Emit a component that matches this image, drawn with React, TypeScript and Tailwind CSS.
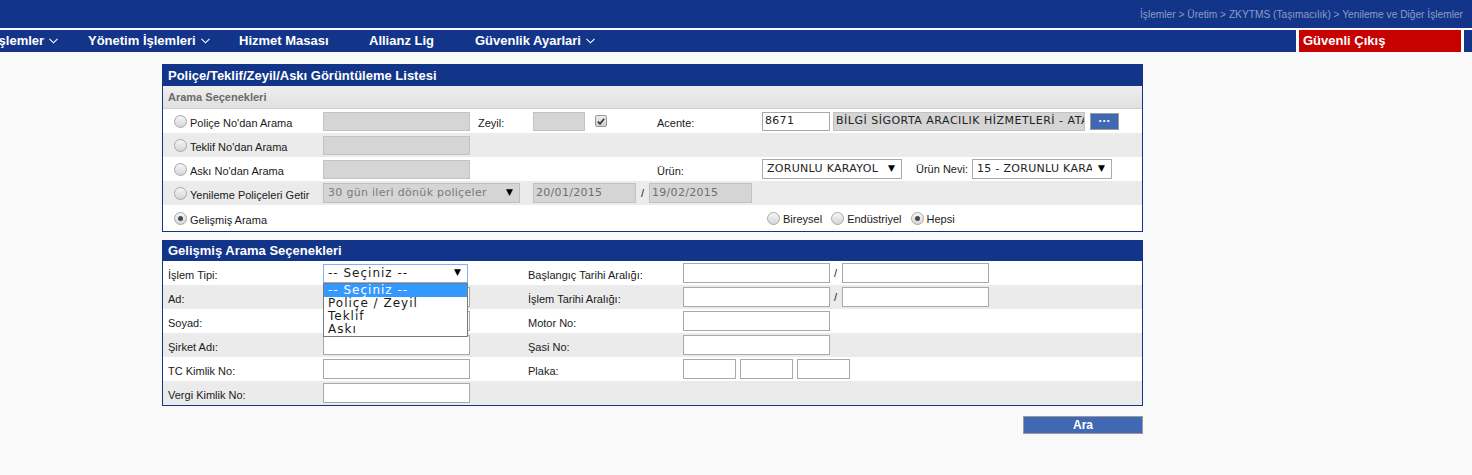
import type { ReactNode } from 'react';

const navy = 'bg-[#12358a]';
const labelFont = "font-['Liberation_Sans',Arial,sans-serif] text-[11px] text-[#1a1a1a]";
const boxFont = "font-['DejaVu_Sans',Verdana,sans-serif] text-[11px] tracking-[0.3px]";
const bigBoxFont = "font-['DejaVu_Sans',Verdana,sans-serif] text-[12px] tracking-[1px]";

function NavChevron() {
  return (
    <svg width="9" height="6" viewBox="0 0 9 6" className="ml-[5px] shrink-0">
      <polyline points="0.5,0.8 4.5,4.8 8.5,0.8" fill="none" stroke="white" strokeWidth="1.1" />
    </svg>
  );
}

function Radio({ checked = false }: { checked?: boolean }) {
  return (
    <span className="flex h-[13px] w-[13px] shrink-0 items-center justify-center rounded-full border border-[#a8a8a8] bg-linear-to-b from-[#f6f6f6] to-[#d6d6d6]">
      {checked && <span className="h-[5px] w-[5px] rounded-full bg-[#4a4a4a]" />}
    </span>
  );
}

function Box({
  className = '',
  value = '',
  disabled = false,
  textColor = 'text-[#222]',
}: {
  className?: string;
  value?: string;
  disabled?: boolean;
  textColor?: string;
}) {
  return (
    <div
      className={`flex items-center overflow-hidden whitespace-nowrap border px-[2px] ${boxFont} ${textColor} ${
        disabled ? 'border-[#c2c2c2] bg-[#d5d5d5]' : 'border-[#a9a9a9] bg-white'
      } ${className}`}
    >
      {value}
    </div>
  );
}

function Select({
  className = '',
  value,
  disabled = false,
  focus = false,
  font = boxFont,
}: {
  className?: string;
  value: string;
  disabled?: boolean;
  focus?: boolean;
  font?: string;
}) {
  return (
    <div
      className={`${className} flex items-center overflow-hidden whitespace-nowrap border pl-[4px] pr-[6px] ${font} ${
        disabled
          ? 'border-[#bfbfbf] bg-[#d5d5d5] text-[#7a7a7a]'
          : focus
            ? 'border-[#7eb4ea] bg-white text-[#222]'
            : 'border-[#a9a9a9] bg-white text-[#222]'
      }`}
    >
      <span className="flex-1 overflow-hidden">{value}</span>
      <span className="ml-[6px] shrink-0 text-[9px] tracking-normal text-black">▼</span>
    </div>
  );
}

function Lbl({ children, className = 'pt-[3px]' }: { children: ReactNode; className?: string }) {
  return <span className={`${labelFont} ${className}`}>{children}</span>;
}

function Row({ children, gray = false, className = 'h-[24px]' }: { children: ReactNode; gray?: boolean; className?: string }) {
  return <div className={`flex items-center ${className} ${gray ? 'bg-[#ebebeb]' : 'bg-white'}`}>{children}</div>;
}

function RadioLabel({ text, checked = false }: { text: string; checked?: boolean }) {
  return (
    <div className="flex w-[160px] items-center gap-[3px] pl-[11px]">
      <Radio checked={checked} />
      <Lbl className="pt-[4px]">{text}</Lbl>
    </div>
  );
}

function AdvRow({
  gray = false,
  left,
  leftInput,
  right,
  rightInput,
}: {
  gray?: boolean;
  left: string;
  leftInput?: ReactNode;
  right?: string;
  rightInput?: ReactNode;
}) {
  return (
    <Row gray={gray}>
      <div className="w-[160px] pl-[5px]">
        <Lbl className="pt-[1px]">{left}</Lbl>
      </div>
      <div className="w-[205px]">{leftInput ?? <Box className="h-[20px] w-[147px]" />}</div>
      <div className="w-[155px]">{right && <Lbl className="pt-[1px]">{right}</Lbl>}</div>
      <div className="flex items-center">{rightInput}</div>
    </Row>
  );
}

function DateRange() {
  return (
    <>
      <Box className="h-[20px] w-[147px]" />
      <span className={`${labelFont} w-[12px] pl-[4px]`}>/</span>
      <Box className="h-[20px] w-[147px]" />
    </>
  );
}

export default function App() {
  return (
    <div className="h-[475px] w-full overflow-hidden bg-[#f9f9f9]">
      <div className={`${navy} h-[28px] pr-[9px] text-right`}>
        <span className="font-['Liberation_Sans',Tahoma,sans-serif] text-[10.2px] leading-[14px] text-[#8e9bc4]">
          İşlemler &gt; Üretim &gt; ZKYTMS (Taşımacılık) &gt; Yenileme ve Diğer İşlemler
        </span>
      </div>
      <div className="h-[2px] bg-white" />
      <div className={`${navy} flex h-[22px] items-center font-['Liberation_Sans',Tahoma,sans-serif] text-[13px] font-bold text-white`}>
        <div className="ml-[-5px] flex w-[93px] shrink-0 items-center">
          İşlemler
          <NavChevron />
        </div>
        <div className="flex w-[151px] shrink-0 items-center">
          Yönetim İşlemleri
          <NavChevron />
        </div>
        <div className="w-[130px] shrink-0">Hizmet Masası</div>
        <div className="w-[106px] shrink-0">Allianz Lig</div>
        <div className="flex shrink-0 items-center">
          Güvenlik Ayarlari
          <NavChevron />
        </div>
        <div className="flex-1" />
        <div className="flex h-full w-[168px] items-stretch">
          <div className="w-[3px] bg-white" />
          <div className="flex w-[162px] items-center bg-[#c70000] pl-[4px]">Güvenli Çıkış</div>
          <div className="w-[3px] bg-white" />
        </div>
        <div className="w-[8px]" />
      </div>

      <div className="ml-[162px] mt-[12px] w-[981px]">
        {/* Arama */}
        <div className="border border-[#12358a]">
          <div className={`${navy} flex h-[21px] items-center pl-[5px] font-['Liberation_Sans',Tahoma,sans-serif] text-[13px] font-bold text-white`}>
            Poliçe/Teklif/Zeyil/Askı Görüntüleme Listesi
          </div>
          <div className="flex h-[23px] items-center border-b border-[#cfcfcf] bg-linear-to-b from-[#efefef] to-[#e0e0e0] pl-[5px] font-['Liberation_Sans',Tahoma,sans-serif] text-[11px] font-bold text-[#6b6b6b]">
            Arama Seçenekleri
          </div>

          <Row>
            <RadioLabel text="Poliçe No'dan Arama" />
            <div className="w-[155px]">
              <Box className="h-[19px] w-[147px]" disabled />
            </div>
            <div className="w-[55px]">
              <Lbl className="pt-[1px]">Zeyil:</Lbl>
            </div>
            <div className="flex w-[124px] items-center">
              <Box className="h-[19px] w-[52px]" disabled />
              <span className="ml-[10px] flex h-[12px] w-[12px] items-center justify-center rounded-[2px] border border-[#9a9a9a] bg-linear-to-b from-[#ececec] to-[#cfcfcf]">
                <svg width="8" height="7" viewBox="0 0 8 7">
                  <polyline points="0.8,3.6 3,5.8 7.2,0.8" fill="none" stroke="#333" strokeWidth="1.6" />
                </svg>
              </span>
            </div>
            <div className="w-[105px]">
              <Lbl className="pt-[1px]">Acente:</Lbl>
            </div>
            <div className="flex items-center">
              <Box className="h-[19px] w-[68px]" value="8671" />
              <Box className="ml-[3px] h-[19px] w-[252px] tracking-[0.5px]" disabled value="BİLGİ SİGORTA ARACILIK HİZMETLERİ - ATA" />
              <div className="ml-[5px] flex h-[17px] w-[29px] items-center justify-center border border-[#9c9c9c] bg-[#4169b3] font-['Liberation_Sans',Arial,sans-serif] text-[12px] font-bold leading-none text-white">
                ···
              </div>
            </div>
          </Row>

          <Row gray>
            <RadioLabel text="Teklif No'dan Arama" />
            <Box className="h-[19px] w-[147px]" disabled />
          </Row>

          <Row>
            <RadioLabel text="Askı No'dan Arama" />
            <div className="w-[155px]">
              <Box className="h-[19px] w-[147px]" disabled />
            </div>
            <div className="w-[179px]" />
            <div className="w-[105px]">
              <Lbl className="pt-[1px]">Ürün:</Lbl>
            </div>
            <Select className="h-[20px] w-[140px]" value="ZORUNLU KARAYOL" />
            <Lbl className="ml-[14px] w-[56px] pt-[1px]">Ürün Nevi:</Lbl>
            <Select className="h-[20px] w-[140px]" value="15 - ZORUNLU KARAYOL" />
          </Row>

          <Row gray>
            <RadioLabel text="Yenileme Poliçeleri Getir" />
            <div className="w-[210px]">
              <Select className="h-[20px] w-[197px]" value="30 gün ileri dönük poliçeler" disabled />
            </div>
            <Box className="h-[20px] w-[103px]" disabled textColor="text-[#6f6f6f]" value="20/01/2015" />
            <span className={`${labelFont} w-[13px] pl-[5px]`}>/</span>
            <Box className="h-[20px] w-[103px]" disabled textColor="text-[#6f6f6f]" value="19/02/2015" />
          </Row>

          <Row className="h-[26px]">
            <RadioLabel text="Gelişmiş Arama" checked />
            <div className="ml-[444px] flex items-center">
              <Radio />
              <Lbl className="ml-[3px] pt-[3px]">Bireysel</Lbl>
              <span className="ml-[9px]">
                <Radio />
              </span>
              <Lbl className="ml-[3px] pt-[3px]">Endüstriyel</Lbl>
              <span className="ml-[9px]">
                <Radio checked />
              </span>
              <Lbl className="ml-[3px] pt-[3px]">Hepsi</Lbl>
            </div>
          </Row>
        </div>

        {/* Gelişmiş */}
        <div className="mt-[8px] border border-[#12358a]">
          <div className={`${navy} flex h-[20px] items-center pl-[5px] font-['Liberation_Sans',Tahoma,sans-serif] text-[13px] font-bold text-white`}>
            Gelişmiş Arama Seçenekleri
          </div>
          <AdvRow
            left="İşlem Tipi:"
            leftInput={
              <div className="relative w-[145px]">
                <Select className="h-[19px] w-[145px]" value="-- Seçiniz --" focus font={bigBoxFont} />
                <div className={`absolute left-0 top-full z-10 w-[145px] border border-[#7a7a7a] bg-white ${bigBoxFont} leading-[13px] text-[#1a1a1a]`}>
                  <div className="bg-[#3399ff] pl-[4px] text-white">-- Seçiniz --</div>
                  <div className="pl-[4px]">Poliçe / Zeyil</div>
                  <div className="pl-[4px]">Teklif</div>
                  <div className="pl-[4px]">Askı</div>
                </div>
              </div>
            }
            right="Başlangıç Tarihi Aralığı:"
            rightInput={<DateRange />}
          />
          <AdvRow gray left="Ad:" right="İşlem Tarihi Aralığı:" rightInput={<DateRange />} />
          <AdvRow left="Soyad:" right="Motor No:" rightInput={<Box className="h-[20px] w-[147px]" />} />
          <AdvRow gray left="Şirket Adı:" right="Şasi No:" rightInput={<Box className="h-[20px] w-[147px]" />} />
          <AdvRow
            left="TC Kimlik No:"
            right="Plaka:"
            rightInput={
              <div className="flex gap-[4px]">
                <Box className="h-[20px] w-[53px]" />
                <Box className="h-[20px] w-[53px]" />
                <Box className="h-[20px] w-[53px]" />
              </div>
            }
          />
          <AdvRow gray left="Vergi Kimlik No:" />
        </div>

        <div className="mt-[10px] flex justify-end">
          <div className="flex h-[18px] w-[120px] items-center justify-center border border-[#9a9a9a] bg-[#4169b3] font-['Liberation_Sans',Tahoma,sans-serif] text-[12px] font-bold text-white">
            Ara
          </div>
        </div>
      </div>
    </div>
  );
}
